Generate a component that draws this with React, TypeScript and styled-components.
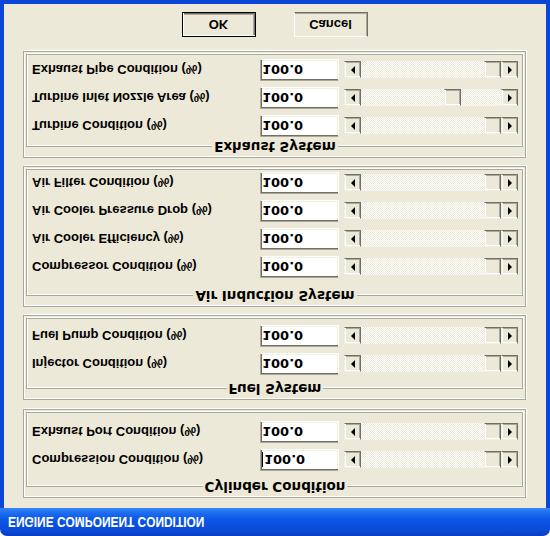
import React from 'react'
import styled, { createGlobalStyle } from 'styled-components'

const GlobalStyle = createGlobalStyle`
  html, body {
    margin: 0;
    padding: 0;
    background: #ffffff;
  }
  body {
    width: 550px;
    height: 536px;
    overflow: hidden;
  }
`

type RowData = {
  label: string
  value: string
  pos: number
  focus?: boolean
}

type GroupData = {
  title: string
  gap: number
  lead: number
  tail: number
  rows: RowData[]
}

const groups: GroupData[] = [
  {
    title: 'Cylinder Condition',
    gap: 10,
    lead: 8,
    tail: 8,
    rows: [
      { label: 'Compression Condition (%)', value: '100.0', pos: 1, focus: true },
      { label: 'Exhaust Port Condition (%)', value: '100.0', pos: 1 },
    ],
  },
  {
    title: 'Fuel System',
    gap: 9,
    lead: 6,
    tail: 6,
    rows: [
      { label: 'Injector Condition (%)', value: '100.0', pos: 1 },
      { label: 'Fuel Pump Condition (%)', value: '100.0', pos: 1 },
    ],
  },
  {
    title: 'Air Induction System',
    gap: 8,
    lead: 10,
    tail: 2,
    rows: [
      { label: 'Compressor Condition (%)', value: '100.0', pos: 1 },
      { label: 'Air Cooler Efficiency (%)', value: '100.0', pos: 1 },
      { label: 'Air Cooler Pressure Drop (%)', value: '100.0', pos: 1 },
      { label: 'Air Filter Condition (%)', value: '100.0', pos: 1 },
    ],
  },
  {
    title: 'Exhaust System',
    gap: 8,
    lead: 2,
    tail: 4,
    rows: [
      { label: 'Turbine Condition (%)', value: '100.0', pos: 1 },
      { label: 'Turbine Inlet Nozzle Area (%)', value: '100.0', pos: 0.675 },
      { label: 'Exhaust Pipe Condition (%)', value: '100.0', pos: 1 },
    ],
  },
]

// the whole captured window is mirrored top to bottom
const Window = styled.div`
  width: 550px;
  height: 536px;
  display: flex;
  flex-direction: column;
  transform: scaleY(-1);
  font-family: 'Liberation Sans', Arial, sans-serif;
`

const TitleBar = styled.div`
  height: 28px;
  flex: none;
  display: flex;
  align-items: center;
  padding-left: 8px;
  border-radius: 7px 7px 0 0;
  background: linear-gradient(
    to bottom,
    #0a3cc4 0%,
    #0b4ad6 20%,
    #0a55e4 55%,
    #1a6af0 80%,
    #3585f8 100%
  );
`

const Caption = styled.span`
  display: inline-block;
  color: #ffffff;
  font-weight: bold;
  font-size: 14px;
  line-height: 16px;
  white-space: nowrap;
  transform: scaleX(0.85);
  transform-origin: left center;
`

const Client = styled.div`
  flex: 1;
  display: flex;
  flex-direction: column;
  background: #ece9d8;
  border: 4px solid #0b46d8;
  border-top: none;
  padding: 0 20px 0 19px;
`

const Panel = styled.div<{ $gap: number }>`
  margin-top: ${(p) => p.$gap}px;
  padding: 2px;
  border: 1px solid #aca899;
  box-shadow: inset 1px 1px #ffffff, 1px 1px #ffffff;
`

const Group = styled.fieldset<{ $lead: number; $tail: number }>`
  margin: 0;
  padding: ${(p) => p.$lead}px 4px ${(p) => p.$tail}px 5px;
  border: 1px solid #aca899;
  box-shadow: inset 1px 1px #ffffff, 1px 1px #ffffff;
  display: flex;
  flex-direction: column;
  gap: 6px;
`

const Legend = styled.legend`
  margin: 0 auto;
  padding: 0 2px;
  background: #ece9d8;
  font-family: 'DejaVu Sans', sans-serif;
  font-weight: bold;
  font-size: 13.5px;
  line-height: 16px;
  color: #000000;
`

const Row = styled.div`
  display: flex;
  align-items: center;
  height: 22px;
`

const Label = styled.div`
  flex: 1;
  font-weight: bold;
  font-size: 13px;
  color: #000000;
  white-space: nowrap;
`

const TextBox = styled.div`
  width: 79px;
  height: 22px;
  box-sizing: border-box;
  display: flex;
  align-items: center;
  padding-left: 1px;
  background: #ffffff;
  border: 1px solid;
  border-color: #aca899 #ffffff #ffffff #aca899;
  box-shadow: inset 1px 1px #716f64, inset -1px -1px #f1efe2;
  font-family: 'DejaVu Sans', sans-serif;
  font-weight: bold;
  font-size: 13px;
  color: #000000;
`

const Caret = styled.span`
  display: inline-block;
  width: 1px;
  height: 15px;
  margin-right: 1px;
  background: #000000;
`

const ScrollBar = styled.div`
  display: flex;
  width: 174px;
  height: 17px;
  margin-left: 5px;
`

const Raised = styled.div`
  width: 17px;
  height: 17px;
  box-sizing: border-box;
  flex: none;
  display: flex;
  align-items: center;
  justify-content: center;
  background: #ece9d8;
  border: 1px solid;
  border-color: #f1efe2 #716f64 #716f64 #f1efe2;
  box-shadow: inset 1px 1px #ffffff, inset -1px -1px #aca899;
`

const Thumb = styled(Raised)`
  position: absolute;
  top: 0;
`

const Track = styled.div`
  flex: 1;
  position: relative;
  background-color: #ffffff;
  background-image: repeating-conic-gradient(#ece9d8 0 25%, #ffffff 0 50%);
  background-size: 2px 2px;
`

const Arrow = styled.span<{ $dir: 'left' | 'right' }>`
  width: 0;
  height: 0;
  border-top: 4px solid transparent;
  border-bottom: 4px solid transparent;
  ${(p) =>
    p.$dir === 'left'
      ? 'border-right: 4px solid #000000;'
      : 'border-left: 4px solid #000000;'}
`

const ButtonRow = styled.div`
  display: flex;
  justify-content: center;
  gap: 38px;
  margin-top: 14px;
`

const Button = styled.div<{ $default?: boolean }>`
  width: 74px;
  height: 25px;
  box-sizing: border-box;
  display: flex;
  align-items: center;
  justify-content: center;
  background: #ece9d8;
  border: 1px solid;
  border-color: ${(p) =>
    p.$default ? '#000000' : '#ffffff #716f64 #716f64 #ffffff'};
  box-shadow: ${(p) =>
    p.$default
      ? 'inset 1px 1px #ffffff, inset -1px -1px #716f64, inset -2px -2px #aca899'
      : 'inset -1px -1px #aca899'};
  font-weight: bold;
  font-size: 13px;
  color: #000000;
`

const Slider: React.FC<{ pos: number }> = ({ pos }) => (
  <ScrollBar>
    <Raised>
      <Arrow $dir="left" />
    </Raised>
    <Track>
      <Thumb style={{ left: `calc(${pos} * (100% - 17px))` }} />
    </Track>
    <Raised>
      <Arrow $dir="right" />
    </Raised>
  </ScrollBar>
)

const ConditionRow: React.FC<{ row: RowData }> = ({ row }) => (
  <Row>
    <Label>{row.label}</Label>
    <TextBox>
      {row.focus && <Caret />}
      {row.value}
    </TextBox>
    <Slider pos={row.pos} />
  </Row>
)

export default function App() {
  return (
    <>
      <GlobalStyle />
      <Window>
        <TitleBar>
          <Caption>ENGINE COMPONENT CONDITION</Caption>
        </TitleBar>
        <Client>
          {groups.map((g) => (
            <Panel key={g.title} $gap={g.gap}>
              <Group $lead={g.lead} $tail={g.tail}>
                <Legend>{g.title}</Legend>
                {g.rows.map((r) => (
                  <ConditionRow key={r.label} row={r} />
                ))}
              </Group>
            </Panel>
          ))}
          <ButtonRow>
            <Button $default>OK</Button>
            <Button>Cancel</Button>
          </ButtonRow>
        </Client>
      </Window>
    </>
  )
}
